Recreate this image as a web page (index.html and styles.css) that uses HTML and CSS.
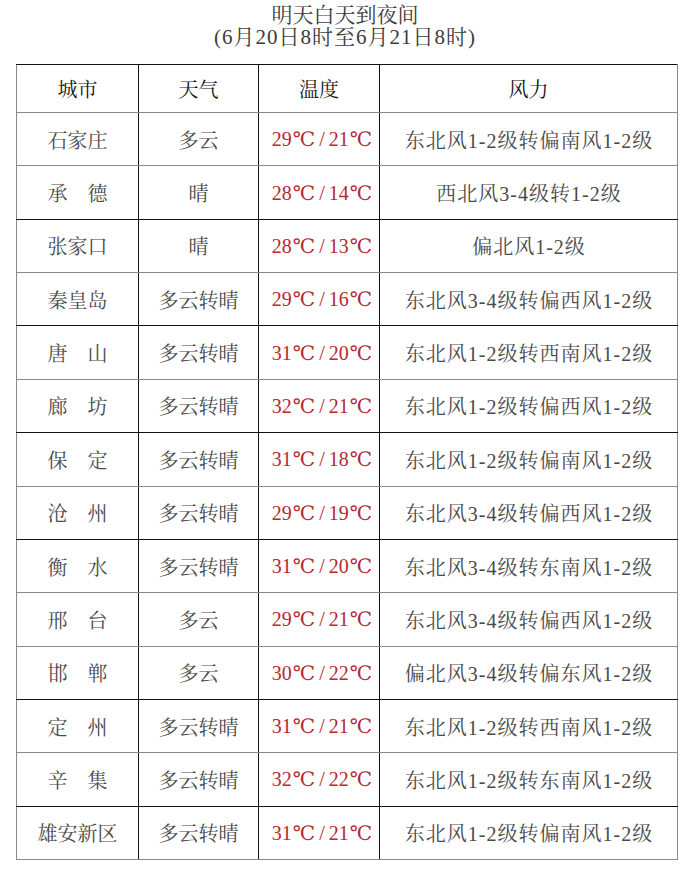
FILE: index.html
```html
<!DOCTYPE html>
<html lang="zh-CN">
<head>
<meta charset="utf-8">
<title>明天白天到夜间</title>
<link rel="stylesheet" href="styles.css">
</head>
<body>
<div class="page">
  <div class="title">
    <div class="title-line">明天白天到夜间</div>
    <div class="title-line sub">(6月20日8时至6月21日8时)</div>
  </div>
  <table class="weather">
    <colgroup>
      <col class="c-city"><col class="c-sky"><col class="c-temp"><col class="c-wind">
    </colgroup>
    <thead>
      <tr class="head"><th>城市</th><th>天气</th><th>温度</th><th>风力</th></tr>
    </thead>
    <tbody>
      <tr><td>石家庄</td><td>多云</td><td class="temp">29<span class="deg">℃</span><span class="sl">/</span>21<span class="deg">℃</span></td><td class="wind">东北风1-2级转偏南风1-2级</td></tr>
      <tr class="dark"><td>承　德</td><td>晴</td><td class="temp">28<span class="deg">℃</span><span class="sl">/</span>14<span class="deg">℃</span></td><td class="wind">西北风3-4级转1-2级</td></tr>
      <tr><td>张家口</td><td>晴</td><td class="temp">28<span class="deg">℃</span><span class="sl">/</span>13<span class="deg">℃</span></td><td class="wind">偏北风1-2级</td></tr>
      <tr class="dark"><td>秦皇岛</td><td>多云转晴</td><td class="temp">29<span class="deg">℃</span><span class="sl">/</span>16<span class="deg">℃</span></td><td class="wind">东北风3-4级转偏西风1-2级</td></tr>
      <tr><td>唐　山</td><td>多云转晴</td><td class="temp">31<span class="deg">℃</span><span class="sl">/</span>20<span class="deg">℃</span></td><td class="wind">东北风1-2级转西南风1-2级</td></tr>
      <tr class="dark"><td>廊　坊</td><td>多云转晴</td><td class="temp">32<span class="deg">℃</span><span class="sl">/</span>21<span class="deg">℃</span></td><td class="wind">东北风1-2级转偏西风1-2级</td></tr>
      <tr><td>保　定</td><td>多云转晴</td><td class="temp">31<span class="deg">℃</span><span class="sl">/</span>18<span class="deg">℃</span></td><td class="wind">东北风1-2级转偏南风1-2级</td></tr>
      <tr class="dark"><td>沧　州</td><td>多云转晴</td><td class="temp">29<span class="deg">℃</span><span class="sl">/</span>19<span class="deg">℃</span></td><td class="wind">东北风3-4级转偏西风1-2级</td></tr>
      <tr><td>衡　水</td><td>多云转晴</td><td class="temp">31<span class="deg">℃</span><span class="sl">/</span>20<span class="deg">℃</span></td><td class="wind">东北风3-4级转东南风1-2级</td></tr>
      <tr><td>邢　台</td><td>多云</td><td class="temp">29<span class="deg">℃</span><span class="sl">/</span>21<span class="deg">℃</span></td><td class="wind">东北风3-4级转偏西风1-2级</td></tr>
      <tr class="dark"><td>邯　郸</td><td>多云</td><td class="temp">30<span class="deg">℃</span><span class="sl">/</span>22<span class="deg">℃</span></td><td class="wind">偏北风3-4级转偏东风1-2级</td></tr>
      <tr><td>定　州</td><td>多云转晴</td><td class="temp">31<span class="deg">℃</span><span class="sl">/</span>21<span class="deg">℃</span></td><td class="wind">东北风1-2级转西南风1-2级</td></tr>
      <tr class="dark"><td>辛　集</td><td>多云转晴</td><td class="temp">32<span class="deg">℃</span><span class="sl">/</span>22<span class="deg">℃</span></td><td class="wind">东北风1-2级转东南风1-2级</td></tr>
      <tr><td>雄安新区</td><td>多云转晴</td><td class="temp">31<span class="deg">℃</span><span class="sl">/</span>21<span class="deg">℃</span></td><td class="wind">东北风1-2级转偏南风1-2级</td></tr>
    </tbody>
  </table>
</div>
</body>
</html>
```
FILE: styles.css
```css
html, body {
  margin: 0;
  padding: 0;
  background: #ffffff;
}

body {
  font-family: "Liberation Serif", "Noto Serif CJK SC", "Noto Sans CJK SC", serif;
  color: #4a4a4a;
}

.page {
  width: 690px;
  height: 892px;
  padding-top: 4px;
  box-sizing: border-box;
}

.title {
  text-align: center;
  color: #3c3c3c;
  font-size: 21px;
  line-height: 22px;
  margin-bottom: 16px;
}

.title .sub {
  letter-spacing: 1px;
}

.weather {
  margin-left: 16px;
  width: 661px;
  border-collapse: collapse;
  table-layout: fixed;
  font-size: 20px;
}

.c-city { width: 122px; }
.c-sky { width: 120px; }
.c-temp { width: 121px; }
.c-wind { width: 298px; }

.weather th,
.weather td {
  padding: 0;
  text-align: center;
  vertical-align: middle;
  border-left: 1px solid #111111;
  border-right: 1px solid #111111;
  border-bottom: 1px solid #8a8a8a;
  white-space: nowrap;
}

.weather th:first-child,
.weather td:first-child {
  border-left-color: #8a8a8a;
}

.weather th:last-child,
.weather td:last-child {
  border-right-color: #8a8a8a;
}

.weather tr.head {
  height: 48px;
}

.weather th {
  border-top: 1px solid #111111;
  color: #151515;
  font-weight: normal;
}

.weather tbody tr {
  height: 53.36px;
}

.weather tr.dark td {
  border-bottom-color: #111111;
}

.weather td.temp {
  color: #b8282e;
  padding-left: 6px;
}

.weather .deg {
  font-family: "DejaVu Serif", "Noto Sans CJK SC", serif;
  font-size: 20px;
  padding-left: 1px;
}

.weather .sl {
  display: inline-block;
  padding: 0 4px;
}

.weather td.wind {
  letter-spacing: 1px;
  padding-left: 1px;
}
```
